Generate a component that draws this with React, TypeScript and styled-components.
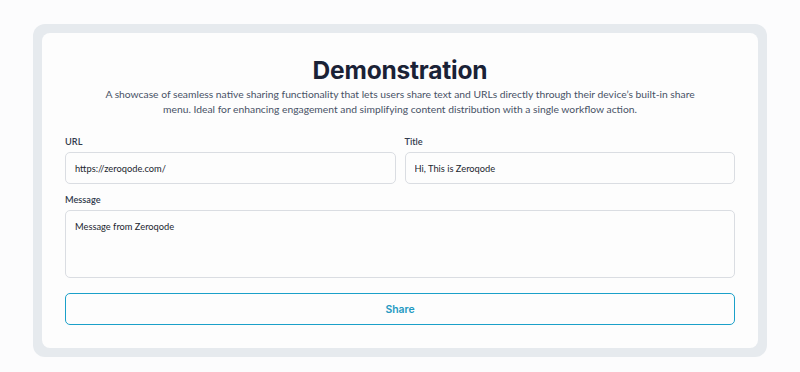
import React from "react";
import styled, { createGlobalStyle } from "styled-components";

const GlobalStyle = createGlobalStyle`
  html, body {
    margin: 0;
    padding: 0;
    background: #fcfcfd;
  }
  * {
    box-sizing: border-box;
  }
`;

const Page = styled.div`
  width: 800px;
  height: 372px;
  padding: 24px 33px 16px;
`;

const Frame = styled.div`
  background: #e6eaee;
  border-radius: 12px;
  padding: 9px;
`;

const Card = styled.div`
  background: #fdfdfd;
  border-radius: 8px;
  padding: 22px 23px 23px;
  display: flex;
  flex-direction: column;
`;

const Header = styled.div`
  display: flex;
  flex-direction: column;
  align-items: center;
  text-align: center;
`;

const Title = styled.h1`
  margin: 0;
  font-family: Inter, "Liberation Sans", sans-serif;
  font-weight: 700;
  font-size: 24.5px;
  line-height: 30px;
  color: #1a2236;
  letter-spacing: -0.2px;
`;

const Description = styled.p`
  margin: 2px 0 0;
  max-width: 600px;
  font-family: Lato, "Liberation Sans", sans-serif;
  font-size: 10.3px;
  line-height: 15px;
  color: #485266;
`;

const Row = styled.div`
  display: grid;
  grid-template-columns: 1fr 1fr;
  gap: 9px;
  margin-top: 19px;
`;

const Field = styled.label<{ $top?: number }>`
  display: flex;
  flex-direction: column;
  gap: 4px;
  margin-top: ${(p) => p.$top ?? 0}px;
`;

const Label = styled.span`
  font-family: Lato, "Liberation Sans", sans-serif;
  font-weight: 600;
  font-size: 9.2px;
  line-height: 12px;
  color: #323b4d;
`;

const Input = styled.input`
  height: 32px;
  padding: 0 9px;
  border: 1px solid #dadde2;
  border-radius: 5px;
  background: #fdfdfd;
  font-family: Lato, "Liberation Sans", sans-serif;
  font-size: 9.3px;
  color: #22262f;
  outline: none;
`;

const TextArea = styled.textarea`
  height: 68px;
  padding: 10px 9px;
  border: 1px solid #dadde2;
  border-radius: 5px;
  background: #fdfdfd;
  font-family: Lato, "Liberation Sans", sans-serif;
  font-size: 9.3px;
  line-height: 12px;
  color: #22262f;
  resize: none;
  outline: none;
`;

const ShareButton = styled.button`
  margin-top: 15px;
  height: 32px;
  border: 1.5px solid #1ba0c9;
  border-radius: 5px;
  background: #fdfdfd;
  font-family: Inter, "Liberation Sans", sans-serif;
  font-weight: 600;
  font-size: 10.4px;
  color: #2499c2;
  cursor: pointer;
`;

const App = () => {
  return (
    <React.Fragment>
      <GlobalStyle />
      <Page>
        <Frame>
          <Card>
            <Header>
              <Title>Demonstration</Title>
              <Description>
                A showcase of seamless native sharing functionality that lets users share text and URLs directly
                through their device’s built-in share menu. Ideal for enhancing engagement and simplifying content
                distribution with a single workflow action.
              </Description>
            </Header>
            <Row>
              <Field>
                <Label>URL</Label>
                <Input defaultValue="https://zeroqode.com/" />
              </Field>
              <Field>
                <Label>Title</Label>
                <Input defaultValue="Hi, This is Zeroqode" />
              </Field>
            </Row>
            <Field $top={10}>
              <Label>Message</Label>
              <TextArea defaultValue="Message from Zeroqode" />
            </Field>
            <ShareButton>Share</ShareButton>
          </Card>
        </Frame>
      </Page>
    </React.Fragment>
  );
};

export default App;
